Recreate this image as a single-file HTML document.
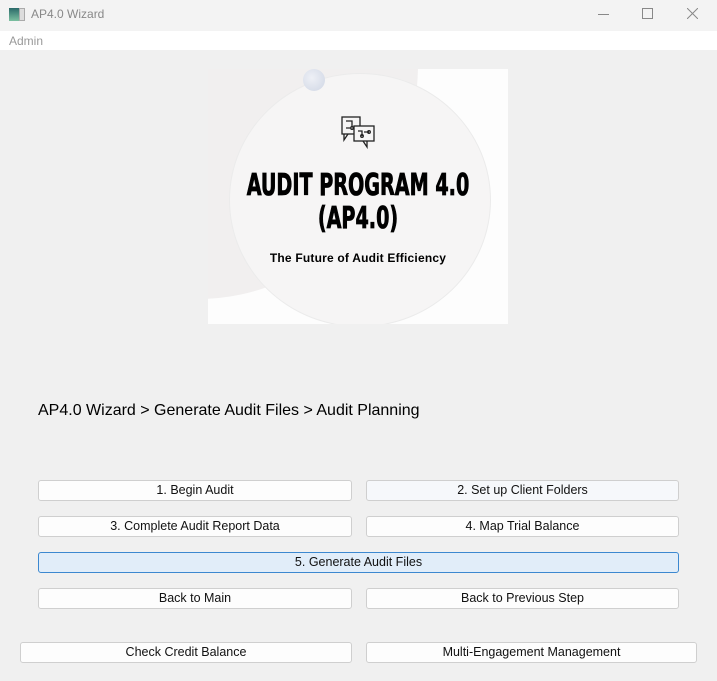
<!DOCTYPE html>
<html><head><style>
body{margin:0;width:717px;height:681px;background:#f0f0f0;font-family:"Liberation Sans",sans-serif;position:relative;overflow:hidden}
.tb{position:absolute;left:0;top:0;width:717px;height:31px;background:#f3f3f3}
.menu{position:absolute;left:0;top:31px;width:717px;height:19px;background:#fff;font-size:12px;color:#999}
.b{position:absolute;height:19px;background:#fdfdfd;border:1px solid #cfcfcf;border-radius:3px;font-size:12.5px;text-align:center;line-height:19px;color:#111;box-sizing:content-box}
</style></head><body>
<div class="tb">
<div style="position:absolute;left:9px;top:8px;width:10px;height:13px;background:linear-gradient(#2a6a6a,#7bc0a0)"></div>
<div style="position:absolute;left:19px;top:8px;width:6px;height:13px;background:#ddd;border:1px solid #aaa;box-sizing:border-box"></div>
<div style="position:absolute;left:31px;top:7px;font-size:12px;color:#888">AP4.0 Wizard</div>
<div style="position:absolute;left:598px;top:14px;width:11px;height:1px;background:#888"></div>
<div style="position:absolute;left:642px;top:8px;width:9px;height:9px;border:1px solid #888"></div>
<svg style="position:absolute;left:687px;top:8px" width="11" height="11"><path d="M0 0L11 11M11 0L0 11" stroke="#888" stroke-width="1"/></svg>
</div>
<div class="menu"><span style="position:absolute;left:9px;top:3px">Admin</span></div>
<div style="position:absolute;left:208px;top:69px;width:300px;height:255px;background:#fdfdfd;overflow:hidden">
<div style="position:absolute;left:-230px;top:-240px;width:440px;height:470px;border-radius:50%;background:#f1efef"></div>
<div style="position:absolute;left:21px;top:4px;width:260px;height:252px;border-radius:50%;background:#f6f5f5;border:1px solid #ebebeb"></div>
<div style="position:absolute;left:95px;top:0px;width:22px;height:22px;border-radius:50%;background:radial-gradient(circle at 40% 40%,#eef0f6,#cfd6e4)"></div>
<svg style="position:absolute;left:133px;top:47px" width="36" height="34" fill="none" stroke="#222" stroke-width="1.3"><rect x="1" y="1" width="18" height="17"/><path d="M3 18v6l4-6"/><rect x="13" y="10" width="20" height="15" fill="#f6f5f5"/><path d="M26 25v6l-4-6M5 5h6v6M5 12h4M17 15h4v5M23 16h5"/><circle cx="11" cy="12" r="1.3"/><circle cx="21" cy="20" r="1.3"/><circle cx="28" cy="16" r="1.3"/></svg>
<div style="position:absolute;left:-50px;width:400px;top:100px;text-align:center;white-space:nowrap;font-family:'DejaVu Sans Condensed','DejaVu Sans',sans-serif;font-weight:bold;font-size:30px;line-height:33px;color:#000;-webkit-text-stroke:0.8px #000;transform:scaleX(0.71)">AUDIT PROGRAM 4.0<br>(AP4.0)</div>
<div style="position:absolute;left:0;width:300px;top:182px;text-align:center;font-weight:bold;font-size:12px;letter-spacing:0.2px;color:#000">The Future of Audit Efficiency</div>
</div>
<div style="position:absolute;left:38px;top:402px;font-size:16px;color:#000">AP4.0 Wizard &gt; Generate Audit Files &gt; Audit Planning</div>
<div class="b" style="left:38px;top:480px;width:312px">1. Begin Audit</div>
<div class="b" style="left:366px;top:480px;width:311px;background:#f6f8fb">2. Set up Client Folders</div>
<div class="b" style="left:38px;top:516px;width:312px">3. Complete Audit Report Data</div>
<div class="b" style="left:366px;top:516px;width:311px">4. Map Trial Balance</div>
<div class="b" style="left:38px;top:552px;width:639px;background:#e1edf9;border-color:#3c88d0">5. Generate Audit Files</div>
<div class="b" style="left:38px;top:588px;width:312px">Back to Main</div>
<div class="b" style="left:366px;top:588px;width:311px">Back to Previous Step</div>
<div class="b" style="left:20px;top:642px;width:330px">Check Credit Balance</div>
<div class="b" style="left:366px;top:642px;width:329px">Multi-Engagement Management</div>
</body></html>
